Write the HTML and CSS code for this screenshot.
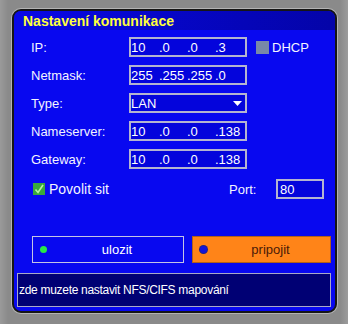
FILE: index.html
```html
<!DOCTYPE html>
<html>
<head>
<meta charset="utf-8">
<link rel="stylesheet" href="styles.css">
</head>
<body>
<div class="screen">
  <div class="panel">
    <div class="title">Nastavení komunikace</div>
    <div class="form">
      <div class="row">
        <span class="label">IP:</span>
        <div class="field"><span class="oct">10</span><span class="oct">.0</span><span class="oct">.0</span><span class="oct">.3</span></div>
        <span class="dhcp"><span class="box gray"></span>DHCP</span>
      </div>
      <div class="row">
        <span class="label">Netmask:</span>
        <div class="field"><span class="oct">255</span><span class="oct">.255</span><span class="oct">.255</span><span class="oct">.0</span></div>
      </div>
      <div class="row">
        <span class="label">Type:</span>
        <div class="field select"><span class="val">LAN</span>
          <svg class="arrow" width="9" height="5" viewBox="0 0 9 5"><path d="M0 0H9L4.5 5Z" fill="#fff"/></svg>
        </div>
      </div>
      <div class="row">
        <span class="label">Nameserver:</span>
        <div class="field"><span class="oct">10</span><span class="oct">.0</span><span class="oct">.0</span><span class="oct">.138</span></div>
      </div>
      <div class="row">
        <span class="label">Gateway:</span>
        <div class="field"><span class="oct">10</span><span class="oct">.0</span><span class="oct">.0</span><span class="oct">.138</span></div>
      </div>
      <div class="row row-net">
        <span class="check">
          <svg width="12" height="12" viewBox="0 0 12 12"><rect width="12" height="12" fill="#3aa83a"/><path d="M2.5 6.5L5 9.5L10 2" fill="none" stroke="#b8f0a0" stroke-width="1.6"/></svg>
        </span>
        <span class="check-text">Povolit sit</span>
        <span class="port-label">Port:</span>
        <div class="field port"><span class="val">80</span></div>
      </div>
    </div>
    <div class="buttons">
      <div class="btn save"><span class="dot green"></span><span class="btn-text">ulozit</span></div>
      <div class="btn connect"><span class="dot blue"></span><span class="btn-text">pripojit</span></div>
    </div>
    <div class="status">zde muzete nastavit NFS/CIFS mapování</div>
  </div>
</div>
</body>
</html>
```
FILE: styles.css
```css
html, body {
  margin: 0;
  padding: 0;
}
body {
  width: 348px;
  height: 324px;
  background: #8c8c8c;
  font-family: "Liberation Sans", Arial, sans-serif;
  overflow: hidden;
}
.screen {
  width: 348px;
  height: 324px;
  padding: 9px 0 0 12px;
  box-sizing: border-box;
  background: linear-gradient(90deg, #9a9a9a 0, #8a8a8a 8px, #8a8a8a 340px, #9c9c9c 348px);
}
.panel {
  width: 325px;
  height: 304px;
  box-sizing: border-box;
  border: 2px solid #161616;
  border-radius: 9px;
  box-shadow: 0 0 0 1px #b4b4b4;
  background: #0808f0;
  overflow: hidden;
  display: flex;
  flex-direction: column;
}
.title {
  height: 19px;
  line-height: 20px;
  padding-left: 9px;
  font-weight: bold;
  font-size: 14px;
  color: #ffff3c;
  background: linear-gradient(90deg, #0808e8 0, #0606c8 45%, #0404a8 100%);
}
.form {
  padding: 7px 0 0 17px;
  display: flex;
  flex-direction: column;
  gap: 8px;
}
.row {
  display: flex;
  align-items: center;
  height: 20px;
  color: #f4f4ff;
  font-size: 13px;
}
.label {
  width: 98px;
}
.field {
  width: 118px;
  height: 20px;
  box-sizing: border-box;
  border: 2px solid #b4b4d0;
  background: #0404dc;
  display: flex;
  align-items: center;
  color: #ffffff;
  font-size: 13px;
}
.oct {
  width: 28px;
}
.select {
  justify-content: space-between;
  padding-right: 3px;
}
.arrow {
  display: block;
}
.dhcp {
  margin-left: 9px;
  display: flex;
  align-items: center;
  gap: 3px;
  font-size: 13px;
}
.box {
  width: 13px;
  height: 13px;
}
.gray {
  background: #7888a8;
}
.row-net {
  margin-top: 2px;
}
.check {
  margin-left: 2px;
  width: 12px;
  height: 12px;
  display: flex;
}
.check-text {
  margin-left: 4px;
  width: 180px;
  font-size: 14px;
}
.port-label {
  width: 47px;
}
.port {
  width: 48px;
  padding-left: 2px;
}
.buttons {
  margin: 37px 0 0 18px;
  display: flex;
  gap: 8px;
}
.btn {
  height: 27px;
  box-sizing: border-box;
  display: flex;
  align-items: center;
  font-size: 13px;
}
.save {
  width: 152px;
  border: 1px solid #c4c4e4;
  background: #0808f0;
  color: #ffffff;
  padding-left: 7px;
}
.connect {
  width: 139px;
  border: 1px solid #b0601c;
  background: #ff8418;
  color: #4a1a08;
  padding-left: 7px;
}
.dot {
  width: 7px;
  height: 7px;
  border-radius: 50%;
  margin-right: 4px;
  flex: none;
}
.green {
  background: #28e848;
}
.blue {
  background: #1414d8;
  box-shadow: 0 0 0 1px #20208a;
}
.btn-text {
  flex: 1;
  text-align: center;
}
.status {
  margin: auto 4px 4px 3px;
  height: 34px;
  box-sizing: border-box;
  border: 1px solid #a8a8c8;
  background: #000074;
  color: #ffffff;
  font-size: 12px;
  letter-spacing: -0.3px;
  display: flex;
  align-items: center;
  padding-left: 1px;
}
```
